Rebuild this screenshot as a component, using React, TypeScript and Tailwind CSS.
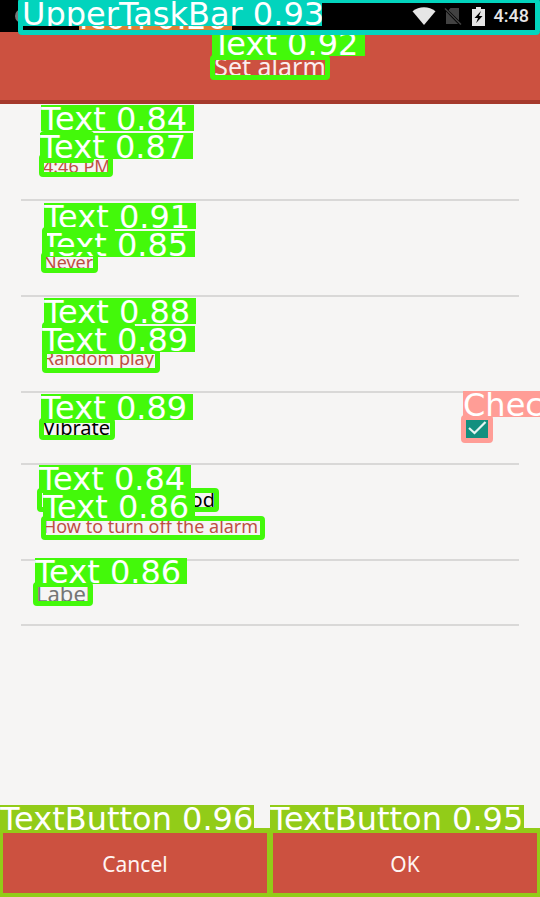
import type { ReactNode } from "react";

function Tag({ className, children }: { className: string; children: ReactNode }) {
  return (
    <span
      className={`pointer-events-none absolute h-[26px] overflow-hidden whitespace-nowrap font-['DejaVu_Sans',sans-serif] text-[32px] leading-[29px] text-white ${className}`}
    >
      {children}
    </span>
  );
}

function Frame({ className }: { className: string }) {
  return <span className={`pointer-events-none absolute rounded-[4px] border-[5px] ${className}`} />;
}

const green = "border-[#43f90a]";

function StatusBar() {
  return (
    <div className="relative z-10 flex h-8 items-center justify-end bg-black pr-[11px] text-[#e6e6e6]">
      <span className="absolute left-[15px] top-[9px] h-3.5 w-3.5 rounded-full bg-[#777]" />
      <svg className="h-[18px] w-6" viewBox="0 0 24 18" fill="currentColor" aria-label="Wi-Fi">
        <path d="M12 18 L0.5 4.2 C7 -1.2 17 -1.2 23.5 4.2 Z" />
      </svg>
      <svg className="ml-2 h-[18px] w-[18px]" viewBox="0 0 18 18" aria-label="No SIM">
        <path d="M6.500 1 H15 V13.500 L4.500 3.200 Z M2 4.500 L14 17 H2 Z" fill="#424242" />
        <path d="M1 1.500 L17 17.500" stroke="#424242" strokeWidth="1.500" />
      </svg>
      <svg className="ml-2.5 h-[19px] w-[13px]" viewBox="0 0 13 19" aria-label="Charging">
        <path d="M4 0 H9 V2 H13 V19 H0 V2 H4 Z" fill="currentColor" />
        <path d="M9 4 L2.500 11 H6 L4.200 16 L10.500 9 H7 Z" fill="#000" />
      </svg>
      <span className="ml-[9px] font-[Roboto,sans-serif] text-[18px] font-medium leading-8">4:48</span>
      <Tag className="left-[79px] top-[4px] w-[153px] bg-[#dd7f35]">Icon 0.26</Tag>
      <Frame className="left-[18px] right-0 top-[-2px] h-[37px] border-[#02d4bd]" />
      <Tag className="left-[22px] top-0 w-[300px] bg-[#02d4bd]">UpperTaskBar 0.93</Tag>
    </div>
  );
}

function Header() {
  return (
    <header className="relative flex h-[72px] items-center justify-center border-b-4 border-[#a5392c] bg-[#cc5140]">
      <div className="relative">
        <h1 className="text-[25px] leading-8 text-[#fbeeee]">Set alarm</h1>
        <Frame className={`-left-1 -right-1 top-[5px] h-[25px] ${green}`} />
        <Tag className="left-[-2px] top-[-20px] w-[153px] bg-[#43f90a]">Text 0.92</Tag>
      </div>
    </header>
  );
}

function Row({
  title,
  detail,
  label,
  children,
}: {
  title?: string;
  detail: string;
  label: string;
  children: ReactNode;
}) {
  return (
    <li className="relative px-[21px]">
      <button
        type="button"
        aria-label={label}
        className="flex h-24 w-full flex-col items-start border-b-2 border-[#d9d8d7] px-[22px] pt-[21px] text-left"
      >
        <span className="h-7 w-[172px] text-right text-[20px] leading-7 text-black">{title}</span>
        <span className="text-[18px] leading-6 text-[#bd4f43]">{detail}</span>
      </button>
      {children}
    </li>
  );
}

function FooterButton({ text, tag }: { text: string; tag: string }) {
  return (
    <div className="relative flex-1">
      <button
        type="button"
        className="h-[69px] w-full border-x-[3px] border-b-4 border-t-[5px] border-[#92cc18] bg-[#cc5140] pt-1 text-[21px] text-[#fff5f3]"
      >
        {text}
      </button>
      <Tag className="left-0 top-[-23px] w-[254px] bg-[#92cc18]">{tag}</Tag>
    </div>
  );
}

export default function App() {
  return (
    <div className="flex min-h-screen flex-col overflow-hidden bg-[#f6f5f4] font-['Noto_Sans',sans-serif]">
      <StatusBar />
      <Header />
      <ul className="flex-1 pt-px">
        <Row detail="4:46 PM" label="Time">
          <Frame className={`left-[40px] top-[26px] h-8 w-[54px] ${green}`} />
          <Tag className="left-[41px] top-0 w-[153px] bg-[#43f90a]">Text 0.84</Tag>
          <Frame className={`left-[39px] top-[49px] h-[23px] w-[74px] ${green}`} />
          <Tag className="left-[40px] top-[28px] w-[153px] bg-[#43f90a]">Text 0.87</Tag>
        </Row>
        <Row detail="Never" label="Repeat">
          <Tag className="left-[44px] top-[2px] w-[152px] bg-[#43f90a]">Text 0.91</Tag>
          <Frame className={`left-[41px] top-[51px] h-[21px] w-[57px] ${green}`} />
          <Tag className="left-[42px] top-[30px] w-[153px] bg-[#43f90a]">Text 0.85</Tag>
          <Frame className={`left-[42px] top-[26px] h-[25px] w-[73px] ${green}`} />
        </Row>
        <Row detail="Random play" label="Alarm sound">
          <Frame className={`left-[42px] top-[25px] h-8 w-[93px] ${green}`} />
          <Tag className="left-[44px] top-px w-[152px] bg-[#43f90a]">Text 0.88</Tag>
          <Frame className={`left-[42px] top-[52px] h-[24px] w-[118px] ${green}`} />
          <Tag className="left-[42px] top-[29px] w-[153px] bg-[#43f90a]">Text 0.89</Tag>
        </Row>
        <li className="relative px-[21px]">
          <label className="flex h-[72px] items-center justify-between border-b-2 border-[#d9d8d7] pl-[22px] pr-[31px] text-[20px] text-black">
            Vibrate
            <span className="relative h-5 w-[22px]">
              <input type="checkbox" defaultChecked className="block h-5 w-[22px] appearance-none bg-[#12907f]" />
              <svg className="absolute inset-0 h-5 w-[22px]" viewBox="0 0 22 20" fill="none">
                <path d="M3 10 L8.500 15 L19.500 4" stroke="#e4f5f2" strokeWidth="2.200" />
              </svg>
            </span>
          </label>
          <Frame className={`left-[39px] top-[25px] h-[22px] w-[76px] ${green}`} />
          <Tag className="left-[41px] top-px w-[152px] bg-[#43f90a]">Text 0.89</Tag>
          <Frame className="right-[47px] top-[22px] h-[28px] w-[32px] border-[#ff9d96]" />
          <Tag className="right-0 top-[-2px] w-[77px] bg-[#ff9d96]">Chec</Tag>
        </li>
        <Row title="Alarm off method" detail="How to turn off the alarm" label="Alarm off method">
          <Frame className={`left-[37px] top-[23px] h-[24px] w-[182px] ${green}`} />
          <Tag className="left-[39px] top-0 w-[152px] bg-[#43f90a]">Text 0.84</Tag>
          <Frame className={`left-[41px] top-[51px] h-[24px] w-[224px] ${green}`} />
          <Tag className="left-[43px] top-[28px] w-[152px] bg-[#43f90a]">Text 0.86</Tag>
        </Row>
        <li className="relative px-[21px]">
          <div className="border-b-2 border-[#d9d8d7] px-[15px]">
            <input
              type="text"
              aria-label="Label"
              placeholder="Label"
              className="block h-[63px] w-full bg-transparent text-[22px] text-black placeholder:text-[#757575]"
            />
          </div>
          <Frame className={`left-[33px] top-[21px] h-[24px] w-[60px] ${green}`} />
          <Tag className="left-[35px] top-[-3px] w-[152px] bg-[#43f90a]">Text 0.86</Tag>
        </li>
      </ul>
      <footer className="flex">
        <FooterButton text="Cancel" tag="TextButton 0.96" />
        <FooterButton text="OK" tag="TextButton 0.95" />
      </footer>
    </div>
  );
}
